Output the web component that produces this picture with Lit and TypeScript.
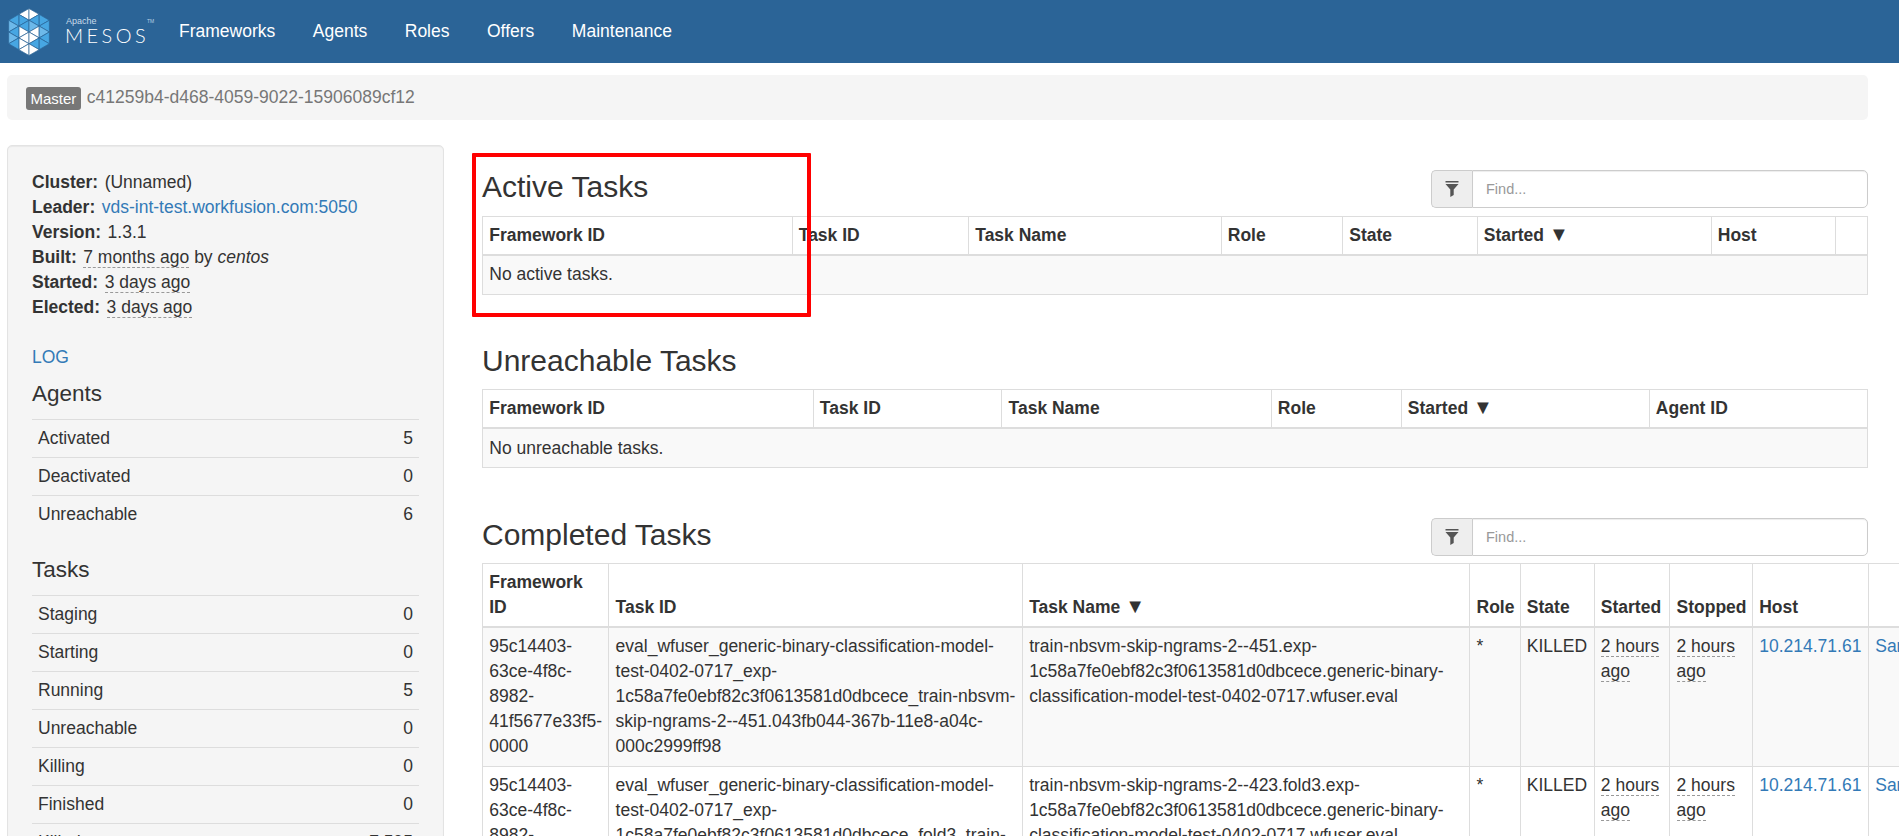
import { LitElement, html, css, svg } from "lit";
import { customElement } from "lit/decorators.js";

const W = 10.175;
const H = 5.875;
type Pt = [number, number];
const tri = (a: Pt, b: Pt, c: Pt, fill: string) => {
  const pts = [a, b, c].map(([k, j]) => `${(k * W).toFixed(2)},${(j * H).toFixed(2)}`).join(" ");
  return svg`<polygon points=${pts} fill=${fill}></polygon>`;
};

// hexagon facets in grid units: column k, half-row j
const WHITE = "#ffffff";
const BLUE = "#47a6e2";
const PALE = "#6db9ea";
const facets: [Pt, Pt, Pt, string][] = [
  [[0, -4], [-1, -3], [0, -2], WHITE],
  [[0, -4], [1, -3], [0, -2], WHITE],
  [[-1, -3], [0, -2], [-1, -1], BLUE],
  [[1, -3], [0, -2], [1, -1], BLUE],
  [[0, -2], [-1, -1], [0, 0], BLUE],
  [[0, -2], [1, -1], [0, 0], PALE],
  [[-1, -1], [0, 0], [-1, 1], WHITE],
  [[1, -1], [0, 0], [1, 1], WHITE],
  [[0, 0], [-1, 1], [0, 2], WHITE],
  [[0, 0], [1, 1], [0, 2], WHITE],
  [[-1, 1], [0, 2], [-1, 3], WHITE],
  [[1, 1], [0, 2], [1, 3], BLUE],
  [[0, 2], [-1, 3], [0, 4], WHITE],
  [[0, 2], [1, 3], [0, 4], WHITE],
  [[-2, -2], [-1, -3], [-1, -1], BLUE],
  [[-2, -2], [-2, 0], [-1, -1], PALE],
  [[-2, 0], [-1, -1], [-1, 1], BLUE],
  [[-2, 0], [-2, 2], [-1, 1], PALE],
  [[-2, 2], [-1, 1], [-1, 3], BLUE],
  [[2, -2], [1, -3], [1, -1], BLUE],
  [[2, -2], [2, 0], [1, -1], BLUE],
  [[2, 0], [1, -1], [1, 1], PALE],
  [[2, 0], [2, 2], [1, 1], BLUE],
  [[2, 2], [1, 1], [1, 3], BLUE],
];

const nav = ["Frameworks", "Agents", "Roles", "Offers", "Maintenance"];
const agents = [["Activated", "5"], ["Deactivated", "0"], ["Unreachable", "6"]];
const tasks = [
  ["Staging", "0"],
  ["Starting", "0"],
  ["Running", "5"],
  ["Unreachable", "0"],
  ["Killing", "0"],
  ["Finished", "0"],
  ["Killed", "7,595"],
];

type Col = [string, number, boolean?];

const activeCols: Col[] = [
  ["Framework ID", 309.5],
  ["Task ID", 176.5],
  ["Task Name", 252.5],
  ["Role", 121.5],
  ["State", 134.5],
  ["Started", 234, true],
  ["Host", 124.5],
  ["", 32],
];

const unreachableCols: Col[] = [
  ["Framework ID", 330.6],
  ["Task ID", 188.7],
  ["Task Name", 269.3],
  ["Role", 130],
  ["Started", 248, true],
  ["Agent ID", 218.5],
];

const completedCols: Col[] = [
  ["Framework ID", 126.3],
  ["Task ID", 413.6],
  ["Task Name", 447.4, true],
  ["Role", 50.3],
  ["State", 74],
  ["Started", 75.7],
  ["Stopped", 82.7],
  ["Host", 116],
  ["", 120],
];

const completed = [
  {
    taskId:
      "eval_wfuser_generic-binary-classification-model-test-0402-0717_exp-1c58a7fe0ebf82c3f0613581d0dbcece_train-nbsvm-skip-ngrams-2--451.043fb044-367b-11e8-a04c-000c2999ff98",
    taskName:
      "train-nbsvm-skip-ngrams-2--451.exp-1c58a7fe0ebf82c3f0613581d0dbcece.generic-binary-classification-model-test-0402-0717.wfuser.eval",
  },
  {
    taskId:
      "eval_wfuser_generic-binary-classification-model-test-0402-0717_exp-1c58a7fe0ebf82c3f0613581d0dbcece_fold3_train-nbsvm-skip-ngrams-2--423.043fb044-367b-11e8-a04c-000c2999ff98",
    taskName:
      "train-nbsvm-skip-ngrams-2--423.fold3.exp-1c58a7fe0ebf82c3f0613581d0dbcece.generic-binary-classification-model-test-0402-0717.wfuser.eval",
  },
];

@customElement("app-root")
export class AppRoot extends LitElement {
  static styles = css`
    :host {
      display: block;
      width: 1899px;
      height: 836px;
      overflow: hidden;
      position: relative;
      font-family: "Liberation Sans", Arial, sans-serif;
      font-size: 17.5px;
      line-height: 25px;
      color: #333;
      background: #fff;
    }

    a {
      color: #337ab7;
      text-decoration: none;
    }

    .navbar {
      display: flex;
      align-items: center;
      height: 63px;
      background: #2b6497;
    }

    .brand {
      display: flex;
      width: 179px;
      height: 63px;
      flex: none;
      padding-left: 8px;
      box-sizing: border-box;
      align-items: center;
    }

    .wordmark {
      position: relative;
      margin-left: 15px;
      height: 63px;
      flex: none;
    }

    .apache {
      position: absolute;
      left: 1px;
      top: 16px;
      font-size: 9px;
      line-height: 10px;
      color: #c9dbea;
    }

    .mesos {
      position: absolute;
      left: 0;
      top: 27px;
      font-family: Lato, "Liberation Sans", sans-serif;
      font-weight: 300;
      font-size: 20px;
      line-height: 17px;
      letter-spacing: 3.4px;
      color: #fff;
    }

    .tm {
      position: absolute;
      left: 82px;
      top: 17px;
      font-size: 5px;
      line-height: 8px;
      color: #b9d0e4;
    }

    .links {
      display: flex;
      gap: 37.5px;
    }

    .links a {
      color: #fff;
    }

    .breadcrumb {
      display: flex;
      align-items: center;
      height: 45px;
      margin: 12px 31px 0 7px;
      padding-left: 19px;
      background: #f5f5f5;
      border-radius: 5px;
      color: #777;
    }

    .label {
      padding: 0 4.5px;
      margin-right: 6px;
      height: 23px;
      line-height: 24px;
      font-size: 15px;
      color: #fff;
      background: #777;
      border-radius: 3px;
      position: relative;
      top: 1px;
    }

    .layout {
      display: flex;
      align-items: flex-start;
      margin-top: 25px;
      padding-left: 7px;
    }

    .well {
      width: 437px;
      flex: none;
      box-sizing: border-box;
      padding: 24px 24px;
      background: #f5f5f5;
      border: 1px solid #e3e3e3;
      border-radius: 5px;
      box-shadow: inset 0 1px 1px rgba(0, 0, 0, 0.05);
    }

    .info b {
      margin-right: 6.5px;
    }

    abbr {
      border-bottom: 1px dashed #999;
      text-decoration: none;
    }

    .log {
      display: block;
      margin: 25px 0 -1px;
    }

    h4 {
      margin: 12.5px 0;
      font-size: 22.5px;
      line-height: 24.75px;
      font-weight: 500;
    }

    .stats {
      margin-bottom: 25px;
    }

    .stats div {
      display: flex;
      justify-content: space-between;
      padding: 6px;
      height: 25px;
      border-top: 1px solid #ddd;
    }

    .main {
      flex: 1;
      min-width: 0;
      margin: 0 31px 0 38px;
      padding-top: 25px;
    }

    .head {
      display: flex;
      justify-content: space-between;
      align-items: flex-start;
      height: 45px;
    }

    .head.first {
      height: 45.5px;
    }

    .head.first + table {
      margin-bottom: 49.25px;
    }

    h3 {
      margin: 0;
      font-size: 30px;
      line-height: 33px;
      font-weight: 500;
    }

    .search {
      display: flex;
      width: 437px;
      height: 38px;
      box-sizing: border-box;
    }

    .addon {
      display: flex;
      align-items: center;
      justify-content: center;
      width: 41px;
      flex: none;
      box-sizing: border-box;
      background: #eee;
      border: 1px solid #ccc;
      border-right: 0;
      border-radius: 5px 0 0 5px;
    }

    .search input {
      flex: 1;
      min-width: 0;
      box-sizing: border-box;
      padding: 0 13px;
      font-family: inherit;
      font-size: 14.5px;
      color: #555;
      background: #fff;
      border: 1px solid #ccc;
      border-radius: 0 5px 5px 0;
      box-shadow: inset 0 1px 1px rgba(0, 0, 0, 0.075);
      outline: none;
    }

    .search input::placeholder {
      color: #999;
    }

    table {
      border-collapse: collapse;
      table-layout: fixed;
      margin-bottom: 49.75px;
    }

    th,
    td {
      padding: 6.25px;
      border: 1px solid #ddd;
      text-align: left;
      overflow: hidden;
    }

    th {
      vertical-align: bottom;
      font-weight: 700;
      border-bottom-width: 2px;
    }

    .arrow {
      font-size: 20px;
      line-height: 0;
    }

    td {
      vertical-align: top;
    }

    tbody tr:nth-child(odd) td {
      background: #f9f9f9;
    }

    .annotation {
      position: absolute;
      left: 471.5px;
      top: 153.3px;
      width: 339px;
      height: 164px;
      box-sizing: border-box;
      border: 4px solid #ff0000;
      border-radius: 1px;
      pointer-events: none;
    }
  `;

  private logo() {
    return html`<svg width="42" height="48" viewBox="-21 -24 42 48">
      <g stroke="#2b6497" stroke-width="0.7" stroke-linejoin="round">
        ${facets.map(([a, b, c, fill]) => tri(a, b, c, fill))}
      </g>
    </svg>`;
  }

  private funnel() {
    return html`<svg width="14" height="16" viewBox="0 0 14 16">
      <rect x="0.5" y="0" width="13" height="1.5" fill="#555"></rect>
      <path d="M0.5 3H13.5L8.7 8.6V14L5.3 16V8.6Z" fill="#555"></path>
    </svg>`;
  }

  private search() {
    return html`<div class="search">
      <span class="addon">${this.funnel()}</span>
      <input placeholder="Find..." />
    </div>`;
  }

  private head(cols: Col[]) {
    return html`<colgroup>
        ${cols.map(([, w]) => html`<col style="width:${w}px" />`)}
      </colgroup>
      <thead>
        <tr>
          ${cols.map(
            ([t, , sorted]) =>
              html`<th>${t}${sorted ? html` <span class="arrow">▼</span>` : ""}</th>`
          )}
        </tr>
      </thead>`;
  }

  private emptyTable(cols: Col[], message: string) {
    const width = cols.reduce((sum, [, w]) => sum + w, 0);
    return html`<table style="width:${width}px">
      ${this.head(cols)}
      <tbody>
        <tr><td colspan=${cols.length}>${message}</td></tr>
      </tbody>
    </table>`;
  }

  private stats(rows: string[][]) {
    return html`<div class="stats">
      ${rows.map(([k, v]) => html`<div><span>${k}</span><span>${v}</span></div>`)}
    </div>`;
  }

  render() {
    const completedWidth = completedCols.reduce((sum, [, w]) => sum + w, 0);
    return html`
      <nav class="navbar">
        <div class="brand">
          ${this.logo()}
          <div class="wordmark">
            <span class="apache">Apache</span>
            <span class="mesos">MESOS</span>
            <span class="tm">TM</span>
          </div>
        </div>
        <div class="links">${nav.map((n) => html`<a href="#">${n}</a>`)}</div>
      </nav>

      <div class="breadcrumb">
        <span class="label">Master</span>
        <span>c41259b4-d468-4059-9022-15906089cf12</span>
      </div>

      <div class="layout">
        <aside class="well">
          <div class="info">
            <div><b>Cluster:</b>(Unnamed)</div>
            <div><b>Leader:</b><a href="#">vds-int-test.workfusion.com:5050</a></div>
            <div><b>Version:</b>1.3.1</div>
            <div><b>Built:</b><abbr>7 months ago</abbr> by <i>centos</i></div>
            <div><b>Started:</b><abbr>3 days ago</abbr></div>
            <div><b>Elected:</b><abbr>3 days ago</abbr></div>
          </div>
          <a class="log" href="#">LOG</a>
          <h4>Agents</h4>
          ${this.stats(agents)}
          <h4>Tasks</h4>
          ${this.stats(tasks)}
        </aside>

        <main class="main">
          <div class="head first">
            <h3>Active Tasks</h3>
            <div>${this.search()}</div>
          </div>
          ${this.emptyTable(activeCols, "No active tasks.")}

          <div class="head"><h3>Unreachable Tasks</h3></div>
          ${this.emptyTable(unreachableCols, "No unreachable tasks.")}

          <div class="head">
            <h3>Completed Tasks</h3>
            <div>${this.search()}</div>
          </div>
          <table style="width:${completedWidth}px">
            ${this.head(completedCols)}
            <tbody>
              ${completed.map(
                (row) => html`<tr>
                  <td>95c14403-63ce-4f8c-8982-41f5677e33f5-0000</td>
                  <td>${row.taskId}</td>
                  <td>${row.taskName}</td>
                  <td>*</td>
                  <td>KILLED</td>
                  <td><abbr>2 hours ago</abbr></td>
                  <td><abbr>2 hours ago</abbr></td>
                  <td><a href="#">10.214.71.61</a></td>
                  <td><a href="#">Sandbox</a></td>
                </tr>`
              )}
            </tbody>
          </table>
        </main>
      </div>

      <div class="annotation"></div>
    `;
  }
}
